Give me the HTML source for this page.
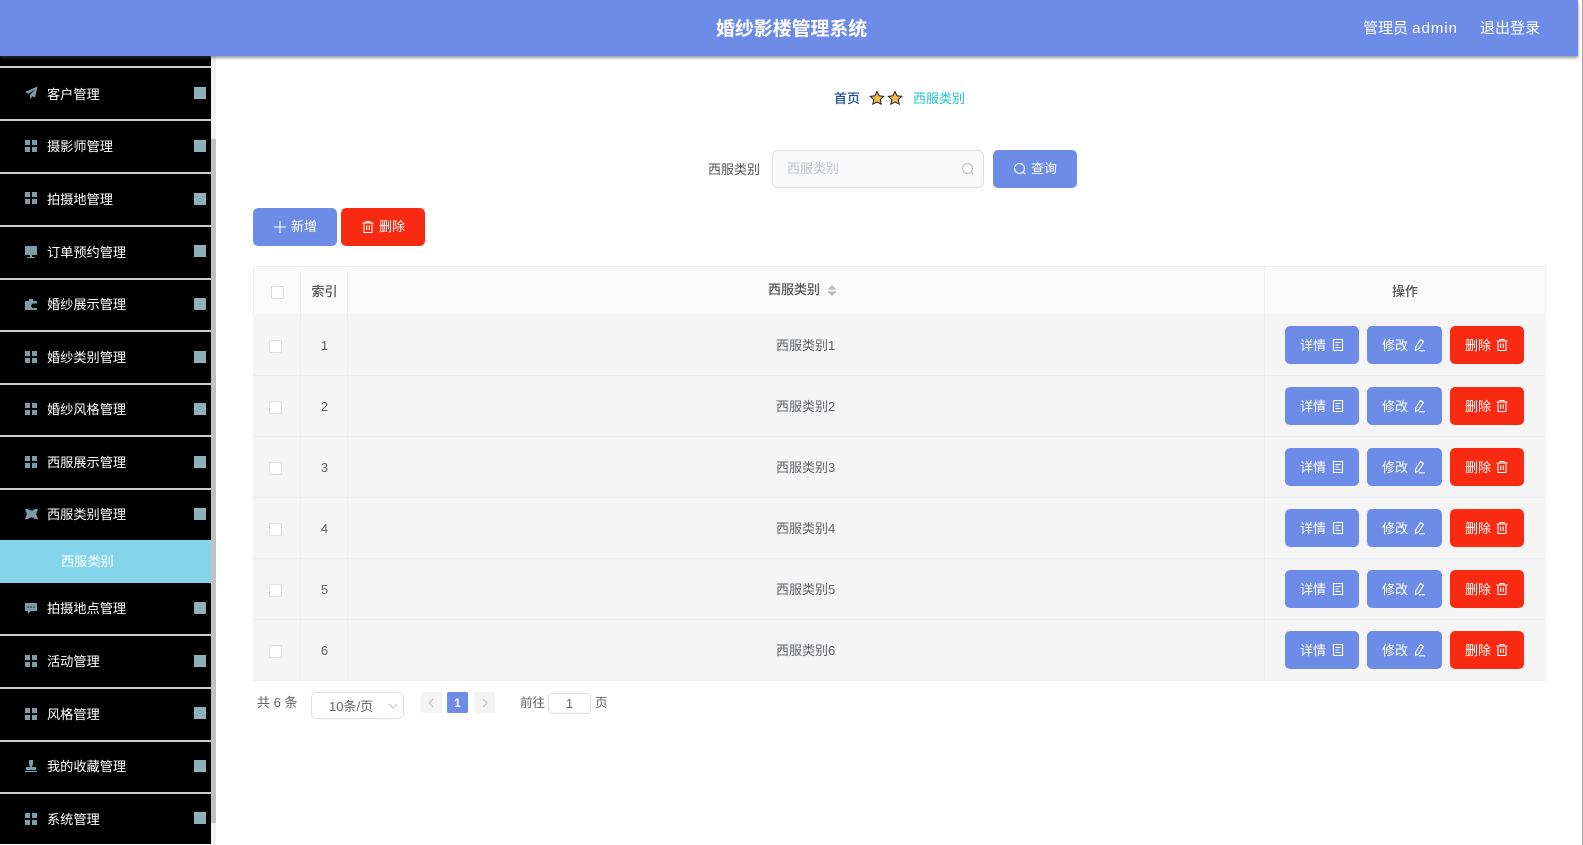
<!DOCTYPE html>
<html lang="zh"><head><meta charset="utf-8"><title>婚纱影楼管理系统</title>
<style>
*{box-sizing:border-box;margin:0;padding:0}
html,body{width:1583px;height:845px;overflow:hidden;background:#fff;font-family:"Liberation Sans","Noto Sans CJK SC",sans-serif;font-size:13px;color:#555}
div,span,svg{position:absolute}
.t{white-space:nowrap;line-height:18px}
#hd{left:0;top:0;width:1578px;height:56px;background:#6d8ce8;box-shadow:0 2px 3px rgba(70,70,70,.55);z-index:5}
#side{left:0;top:0;width:211px;height:844px;background:#000}
.sep{left:0;width:211px;height:2px;background:#ccc}
.m{left:47px;color:#fff;font-size:13.2px;margin-top:1px}
.sq{left:194px;width:12px;height:12px;background:#8fb1ba}
.ic{left:24px;width:14px;height:14px;fill:#7f9da8}
.btn{height:38px;border-radius:5px;color:#fff;background:#6d8ce8;font-size:13px;line-height:38px}
.btn.r{background:#f92a12}
.btn span{white-space:nowrap;top:0}
.row .btn span{top:1px}
.btn svg{fill:none;stroke:#fff;stroke-width:1.1}
.row{left:253px;width:1293px;height:61px;background:#f5f5f5;border-bottom:1px solid #ebeef5}
.vl{width:1px;top:0;bottom:0;background:#ebeef5}
.cb{left:16px;top:25px;width:13px;height:13px;background:#fff;border:1px solid #dcdfe6;border-radius:2px}
.c{text-align:center;white-space:nowrap;line-height:18px;top:22px;font-size:13px;color:#606266}
.n{margin-left:1px}
.first .c{top:23px}
.first .cb{top:26px}
</style></head><body>
<div id="side">
<div class="sep" style="top:66px"></div><div class="sep" style="top:119px"></div><div class="sep" style="top:172px"></div><div class="sep" style="top:225px"></div><div class="sep" style="top:278px"></div><div class="sep" style="top:330px"></div><div class="sep" style="top:383px"></div><div class="sep" style="top:435px"></div><div class="sep" style="top:488px"></div><div class="sep" style="top:634px"></div><div class="sep" style="top:687px"></div><div class="sep" style="top:740px"></div><div class="sep" style="top:792px"></div>
<div style="left:0;top:540px;width:211px;height:43px;background:#84d5ea"></div>
<div class="t" style="left:61px;top:553px;color:#fff;font-size:13.2px">西服类别</div>
<div class="t m" style="top:85px">客户管理</div><div class="sq" style="top:87px"></div>
<svg class="ic" style="top:86px" viewBox="0 0 14 14"><path d="M13.500 .5 1 6l3.500 1.800L11 3.500 6 9v4.500l2.300-3.200 2.700 1.200z"/></svg>
<div class="t m" style="top:137px">摄影师管理</div><div class="sq" style="top:140px"></div>
<svg class="ic" style="top:139px" viewBox="0 0 14 14"><path d="M1 1h5v5H1zM8 1h5v5H8zM1 8h5v5H1zM8 8h5v5H8z"/></svg>
<div class="t m" style="top:190px">拍摄地管理</div><div class="sq" style="top:193px"></div>
<svg class="ic" style="top:191px" viewBox="0 0 14 14"><path d="M1 1h5v5H1zM8 1h5v5H8zM1 8h5v5H1zM8 8h5v5H8z"/></svg>
<div class="t m" style="top:243px">订单预约管理</div><div class="sq" style="top:245px"></div>
<svg class="ic" style="top:245px" viewBox="0 0 14 14"><path d="M1 1h12v9H1zM6 10h2v2H6zM3 12h8v1H3z"/></svg>
<div class="t m" style="top:295px">婚纱展示管理</div><div class="sq" style="top:298px"></div>
<svg class="ic" style="top:297px" viewBox="0 0 14 14"><path fill-rule="evenodd" d="M5 2h4v2H5zM1 4h12v2.500H9.500a2.200 2.200 0 0 0 0 4.500H13v2H1z"/></svg>
<div class="t m" style="top:348px">婚纱类别管理</div><div class="sq" style="top:351px"></div>
<svg class="ic" style="top:350px" viewBox="0 0 14 14"><path d="M1 1h5v5H1zM8 1h5v5H8zM1 8h5v5H1zM8 8h5v5H8z"/></svg>
<div class="t m" style="top:400px">婚纱风格管理</div><div class="sq" style="top:403px"></div>
<svg class="ic" style="top:402px" viewBox="0 0 14 14"><path d="M1 1h5v5H1zM8 1h5v5H8zM1 8h5v5H1zM8 8h5v5H8z"/></svg>
<div class="t m" style="top:453px">西服展示管理</div><div class="sq" style="top:456px"></div>
<svg class="ic" style="top:455px" viewBox="0 0 14 14"><path d="M1 1h5v5H1zM8 1h5v5H8zM1 8h5v5H1zM8 8h5v5H8z"/></svg>
<div class="t m" style="top:505px">西服类别管理</div><div class="sq" style="top:508px"></div>
<svg class="ic" style="left:24px;top:507px;width:15px" viewBox="0 0 15 14"><path d="M1 2h3.500a3 1.500 0 0 0 6 0H14l-1.800 5 1.800 5h-3.500a3 1.500 0 0 0-6 0H1l1.800-5z"/></svg>
<div class="t m" style="top:599px">拍摄地点管理</div><div class="sq" style="top:602px"></div>
<svg class="ic" style="top:601px" viewBox="0 0 14 14"><path fill-rule="evenodd" d="M1 2h12v8H7l-3 3v-3H1zM3.500 5.500v1.200h1.200V5.500zM6.400 5.500v1.200h1.200V5.500zM9.300 5.500v1.200h1.200V5.500z"/></svg>
<div class="t m" style="top:652px">活动管理</div><div class="sq" style="top:655px"></div>
<svg class="ic" style="top:654px" viewBox="0 0 14 14"><path d="M1 1h5v5H1zM8 1h5v5H8zM1 8h5v5H1zM8 8h5v5H8z"/></svg>
<div class="t m" style="top:705px">风格管理</div><div class="sq" style="top:707px"></div>
<svg class="ic" style="top:707px" viewBox="0 0 14 14"><path d="M1 1h5v5H1zM8 1h5v5H8zM1 8h5v5H1zM8 8h5v5H8z"/></svg>
<div class="t m" style="top:757px">我的收藏管理</div><div class="sq" style="top:760px"></div>
<svg class="ic" style="top:759px" viewBox="0 0 14 14"><path d="M5 1h4v4l-1 3h4v3H2V8h4L5 5zM1 12h12v1H1z"/></svg>
<div class="t m" style="top:810px">系统管理</div><div class="sq" style="top:812px"></div>
<svg class="ic" style="top:812px" viewBox="0 0 14 14"><path d="M1 1h5v5H1zM8 1h5v5H8zM1 8h5v5H1zM8 8h5v5H8z"/></svg>
</div>
<div style="left:211px;top:56px;width:5px;height:789px;background:#f1f1f1"></div>
<div style="left:211px;top:139px;width:5px;height:684px;background:#c1c1c1"></div>
<div style="left:1582px;top:0;width:1px;height:845px;background:#aaa"></div>

<div id="hd">
<div class="t" style="left:716px;top:18px;font-size:18.900px;line-height:24px;font-weight:700;color:#fff">婚纱影楼管理系统</div>
<div class="t" style="left:1363px;top:20px;font-size:15px;color:#fff">管理员 <b style="font-weight:400;letter-spacing:1px">admin</b></div>
<div class="t" style="left:1480px;top:20px;font-size:15px;color:#fff">退出登录</div>
</div>

<div class="t" style="left:834px;top:90px;color:#1d50a5;font-weight:500">首页</div>
<svg style="left:869px;top:90px;width:35px;height:16px" viewBox="0 0 35 16"><path fill="#f2bd4b" stroke="#222" stroke-width="1" d="M8 1.500l2 4.300 4.700.6-3.400 3.200.9 4.600L8 11.900l-4.200 2.300.9-4.600L1.300 6.400 6 5.800z"/><path fill="#f2bd4b" stroke="#222" stroke-width="1" d="M26 1.500l2 4.300 4.700.6-3.400 3.200.9 4.600-4.200-2.300-4.200 2.300.9-4.600-3.400-3.200 4.700-.6z"/></svg>
<div class="t" style="left:913px;top:90px;color:#1cc4c9">西服类别</div>

<div class="t" style="left:708px;top:161px;color:#555">西服类别</div>
<div style="left:772px;top:150px;width:212px;height:38px;background:#fafafa;border:1px solid #dcdfe6;border-radius:6px"></div>
<div class="t" style="left:787px;top:160px;color:#c0c4cc">西服类别</div>
<svg style="left:961px;top:162px;width:14px;height:14px;fill:none;stroke:#c0c4cc;stroke-width:1.200" viewBox="0 0 14 14"><circle cx="6.500" cy="6.500" r="5"/><path d="M10.200 10.200l2 2"/></svg>
<div class="btn" style="left:993px;top:150px;width:84px"><svg style="left:20px;top:12px;width:14px;height:14px" viewBox="0 0 14 14"><circle cx="6.500" cy="6.500" r="5"/><path d="M10.200 10.200l2 2"/></svg><span style="left:38px">查询</span></div>

<div class="btn" style="left:253px;top:208px;width:84px"><svg style="left:20px;top:12px;width:14px;height:14px" viewBox="0 0 14 14"><path d="M7 1v12M1 7h12"/></svg><span style="left:38px">新增</span></div>
<div class="btn r" style="left:341px;top:208px;width:84px"><svg style="left:20px;top:12px;width:14px;height:14px" viewBox="0 0 14 14"><path d="M1.500 3h11M5 3V1.500h4V3M3 3v9.500h8V3M5.700 5.500v4.500M8.300 5.500v4.500"/></svg><span style="left:38px">删除</span></div>

<div style="left:253px;top:266px;width:1293px;height:48px;background:#fbfbfb;border-top:1px solid #ebeef5">
<div class="vl" style="left:0"></div><div class="vl" style="left:47px"></div><div class="vl" style="left:94px"></div><div class="vl" style="left:1011px"></div><div class="vl" style="left:1292px"></div>
<div class="cb" style="left:18px;top:19px"></div>
<div class="c" style="left:48px;width:47px;top:16px;color:#555;font-weight:500">索引</div>
<div class="c" style="left:515px;top:14px;color:#555;font-weight:500">西服类别</div>
<svg style="left:574px;top:17px;width:10px;height:13px;fill:#b4b8c0" viewBox="0 0 10 13"><path d="M5 1l4.500 4.500h-9zM5 12l4.500-4.500h-9z"/></svg>
<div class="c" style="left:1139px;top:16px;color:#555;font-weight:500">操作</div>
</div>

<div class="row first" style="top:314px;height:62px"><div class="vl" style="left:47px"></div><div class="vl" style="left:94px"></div><div class="vl" style="left:1011px"></div><div class="cb"></div><div class="c" style="left:48px;width:47px">1</div><div class="c" style="left:523px">西服类别1</div>
<div class="btn" style="left:1032px;top:12px;width:74px"><span style="left:15px">详情</span><svg style="left:46px;top:12px;width:14px;height:14px" viewBox="0 0 14 14"><path d="M2.500 1.500h9v11h-9zM4.500 4.500h5M4.500 7h3M4.500 9.500h5"/></svg></div>
<div class="btn" style="left:1114px;top:12px;width:75px"><span style="left:15px">修改</span><svg style="left:45px;top:12px;width:14px;height:14px" viewBox="0 0 14 14"><path d="M8.500 1.500l3 2-5 7.500-3 1.500.2-3.500zM7 12.800h6"/></svg></div>
<div class="btn r" style="left:1197px;top:12px;width:74px"><span style="left:15px">删除</span><svg style="left:45px;top:12px;width:14px;height:14px" viewBox="0 0 14 14"><path d="M1.500 3h11M5 3V1.500h4V3M3 3v9.500h8V3M5.700 5.500v4.500M8.300 5.500v4.500"/></svg></div></div>

<div class="row" style="top:376px"><div class="vl" style="left:47px"></div><div class="vl" style="left:94px"></div><div class="vl" style="left:1011px"></div><div class="cb"></div><div class="c" style="left:48px;width:47px">2</div><div class="c" style="left:523px">西服类别2</div>
<div class="btn" style="left:1032px;top:11px;width:74px"><span style="left:15px">详情</span><svg style="left:46px;top:12px;width:14px;height:14px" viewBox="0 0 14 14"><path d="M2.500 1.500h9v11h-9zM4.500 4.500h5M4.500 7h3M4.500 9.500h5"/></svg></div>
<div class="btn" style="left:1114px;top:11px;width:75px"><span style="left:15px">修改</span><svg style="left:45px;top:12px;width:14px;height:14px" viewBox="0 0 14 14"><path d="M8.500 1.500l3 2-5 7.500-3 1.500.2-3.500zM7 12.800h6"/></svg></div>
<div class="btn r" style="left:1197px;top:11px;width:74px"><span style="left:15px">删除</span><svg style="left:45px;top:12px;width:14px;height:14px" viewBox="0 0 14 14"><path d="M1.500 3h11M5 3V1.500h4V3M3 3v9.500h8V3M5.700 5.500v4.500M8.300 5.500v4.500"/></svg></div></div>

<div class="row" style="top:437px"><div class="vl" style="left:47px"></div><div class="vl" style="left:94px"></div><div class="vl" style="left:1011px"></div><div class="cb"></div><div class="c" style="left:48px;width:47px">3</div><div class="c" style="left:523px">西服类别3</div>
<div class="btn" style="left:1032px;top:11px;width:74px"><span style="left:15px">详情</span><svg style="left:46px;top:12px;width:14px;height:14px" viewBox="0 0 14 14"><path d="M2.500 1.500h9v11h-9zM4.500 4.500h5M4.500 7h3M4.500 9.500h5"/></svg></div>
<div class="btn" style="left:1114px;top:11px;width:75px"><span style="left:15px">修改</span><svg style="left:45px;top:12px;width:14px;height:14px" viewBox="0 0 14 14"><path d="M8.500 1.500l3 2-5 7.500-3 1.500.2-3.500zM7 12.800h6"/></svg></div>
<div class="btn r" style="left:1197px;top:11px;width:74px"><span style="left:15px">删除</span><svg style="left:45px;top:12px;width:14px;height:14px" viewBox="0 0 14 14"><path d="M1.500 3h11M5 3V1.500h4V3M3 3v9.500h8V3M5.700 5.500v4.500M8.300 5.500v4.500"/></svg></div></div>

<div class="row" style="top:498px"><div class="vl" style="left:47px"></div><div class="vl" style="left:94px"></div><div class="vl" style="left:1011px"></div><div class="cb"></div><div class="c" style="left:48px;width:47px">4</div><div class="c" style="left:523px">西服类别4</div>
<div class="btn" style="left:1032px;top:11px;width:74px"><span style="left:15px">详情</span><svg style="left:46px;top:12px;width:14px;height:14px" viewBox="0 0 14 14"><path d="M2.500 1.500h9v11h-9zM4.500 4.500h5M4.500 7h3M4.500 9.500h5"/></svg></div>
<div class="btn" style="left:1114px;top:11px;width:75px"><span style="left:15px">修改</span><svg style="left:45px;top:12px;width:14px;height:14px" viewBox="0 0 14 14"><path d="M8.500 1.500l3 2-5 7.500-3 1.500.2-3.500zM7 12.800h6"/></svg></div>
<div class="btn r" style="left:1197px;top:11px;width:74px"><span style="left:15px">删除</span><svg style="left:45px;top:12px;width:14px;height:14px" viewBox="0 0 14 14"><path d="M1.500 3h11M5 3V1.500h4V3M3 3v9.500h8V3M5.700 5.500v4.500M8.300 5.500v4.500"/></svg></div></div>

<div class="row" style="top:559px"><div class="vl" style="left:47px"></div><div class="vl" style="left:94px"></div><div class="vl" style="left:1011px"></div><div class="cb"></div><div class="c" style="left:48px;width:47px">5</div><div class="c" style="left:523px">西服类别5</div>
<div class="btn" style="left:1032px;top:11px;width:74px"><span style="left:15px">详情</span><svg style="left:46px;top:12px;width:14px;height:14px" viewBox="0 0 14 14"><path d="M2.500 1.500h9v11h-9zM4.500 4.500h5M4.500 7h3M4.500 9.500h5"/></svg></div>
<div class="btn" style="left:1114px;top:11px;width:75px"><span style="left:15px">修改</span><svg style="left:45px;top:12px;width:14px;height:14px" viewBox="0 0 14 14"><path d="M8.500 1.500l3 2-5 7.500-3 1.500.2-3.500zM7 12.800h6"/></svg></div>
<div class="btn r" style="left:1197px;top:11px;width:74px"><span style="left:15px">删除</span><svg style="left:45px;top:12px;width:14px;height:14px" viewBox="0 0 14 14"><path d="M1.500 3h11M5 3V1.500h4V3M3 3v9.500h8V3M5.700 5.500v4.500M8.300 5.500v4.500"/></svg></div></div>

<div class="row" style="top:620px"><div class="vl" style="left:47px"></div><div class="vl" style="left:94px"></div><div class="vl" style="left:1011px"></div><div class="cb"></div><div class="c" style="left:48px;width:47px">6</div><div class="c" style="left:523px">西服类别6</div>
<div class="btn" style="left:1032px;top:11px;width:74px"><span style="left:15px">详情</span><svg style="left:46px;top:12px;width:14px;height:14px" viewBox="0 0 14 14"><path d="M2.500 1.500h9v11h-9zM4.500 4.500h5M4.500 7h3M4.500 9.500h5"/></svg></div>
<div class="btn" style="left:1114px;top:11px;width:75px"><span style="left:15px">修改</span><svg style="left:45px;top:12px;width:14px;height:14px" viewBox="0 0 14 14"><path d="M8.500 1.500l3 2-5 7.500-3 1.500.2-3.500zM7 12.800h6"/></svg></div>
<div class="btn r" style="left:1197px;top:11px;width:74px"><span style="left:15px">删除</span><svg style="left:45px;top:12px;width:14px;height:14px" viewBox="0 0 14 14"><path d="M1.500 3h11M5 3V1.500h4V3M3 3v9.500h8V3M5.700 5.500v4.500M8.300 5.500v4.500"/></svg></div></div>

<div class="t" style="left:257px;top:694px;font-size:13px;color:#606266">共 6 条</div>
<div style="left:311px;top:692px;width:93px;height:27px;border:1px solid #dcdfe6;border-radius:5px;background:#fff"></div>
<div class="t" style="left:329px;top:698px;font-size:13px;color:#606266">10条/页</div>
<svg style="left:388px;top:702px;width:10px;height:8px;fill:none;stroke:#c0c4cc;stroke-width:1" viewBox="0 0 10 8"><path d="M1 2l4 4 4-4"/></svg>
<div style="left:421px;top:692px;width:21px;height:21px;background:#f4f4f5"></div>
<svg style="left:427px;top:698px;width:9px;height:10px;fill:none;stroke:#c0c4cc;stroke-width:1.200" viewBox="0 0 9 10"><path d="M6 1L2 5l4 4"/></svg>
<div style="left:447px;top:692px;width:21px;height:21px;background:#6d8ce8;border-radius:2px;color:#fff;font-weight:700;font-size:12px;line-height:23px;text-align:center">1</div>
<div style="left:474px;top:692px;width:21px;height:21px;background:#f4f4f5"></div>
<svg style="left:480px;top:698px;width:9px;height:10px;fill:none;stroke:#c0c4cc;stroke-width:1.200" viewBox="0 0 9 10"><path d="M3 1l4 4-4 4"/></svg>
<div class="t" style="left:520px;top:694px;font-size:12.500px;color:#606266">前往</div>
<div style="left:548px;top:693px;width:43px;height:21px;border:1px solid #dcdfe6;border-radius:4px;background:#fff;text-align:center;line-height:19px;font-size:13px;color:#606266">1</div>
<div class="t" style="left:595px;top:694px;font-size:12.500px;color:#606266">页</div>
</body></html>
